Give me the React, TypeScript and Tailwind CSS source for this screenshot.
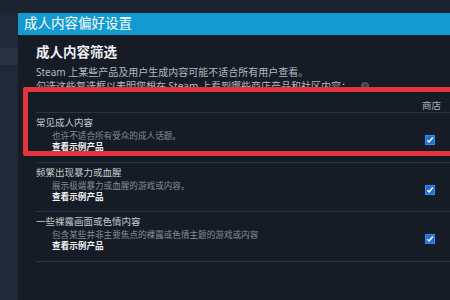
import React from "react";

const rows = [
  { title: "常见成人内容", desc: "也许不适合所有受众的成人话题。" },
  { title: "频繁出现暴力或血腥", desc: "展示极端暴力或血腥的游戏或内容。" },
  { title: "一些裸露画面或色情内容", desc: "包含某些并非主要焦点的裸露或色情主题的游戏或内容" },
];

const Checkbox = () => (
  <div className="w-[10px] h-[10px] bg-[#1f6fd6] border border-[#3b86e6] flex items-center justify-center">
    <svg width="8" height="8" viewBox="0 0 8 8">
      <path d="M1.3 4.3 L3.1 6 L6.8 1.6" stroke="#fff" strokeWidth="1.5" fill="none" />
    </svg>
  </div>
);

export default function App() {
  return (
    <div
      className="w-[450px] h-[300px] bg-[#1c2432] flex flex-col overflow-hidden"
      style={{ fontFamily: '"Noto Sans", "Noto Sans CJK SC", sans-serif' }}
    >
      {/* top strip */}
      <div className="h-[13px] shrink-0" />
      <div className="flex flex-1 min-h-0">
        {/* sidebar */}
        <div className="w-[18px] shrink-0 bg-[#1e2838] flex flex-col">
          <div className="h-[35px]" />
          <div className="h-[17px] bg-[#2a3341]" />
        </div>

        {/* panel */}
        <div className="flex-1 bg-[#161c26] relative">
          <div className="h-[22px] bg-[#139ad0] flex items-center px-[6px] text-white text-[13.5px] leading-none">
            成人内容偏好设置
          </div>

          <div className="pl-[18px]">
            <div className="mt-[9px] text-[13.5px] leading-[17px] font-bold text-[#eef0f2]">成人内容筛选</div>
            <div className="mt-[5px] text-[10px] leading-[13.5px] text-[#b4b9c0]">
              <div>Steam 上某些产品及用户生成内容可能不适合所有用户查看。</div>
              <div className="flex items-center">
                <span>勾选这些复选框以表明您想在 Steam 上看到哪些商店产品和社区内容：</span>
                <span className="ml-[10px] w-[8px] h-[8px] rounded-full bg-[#4b535f] text-[#1b2230] text-[6px] font-bold leading-none flex items-center justify-center">
                  ?
                </span>
              </div>
            </div>

            <div className="mt-[7px] flex justify-end pr-[9px] text-[9.5px] leading-[12px] text-[#a9afb7] border-b border-[#2c3441]">
              商店
            </div>

            {rows.map((r) => (
              <div key={r.title} className="h-[49.5px] border-b border-[#2c3441] flex justify-between">
                <div className="pt-[4px]">
                  <div className="text-[9.5px] leading-[12px] text-[#c5cad0]">{r.title}</div>
                  <div className="ml-[16px] mt-[2px] text-[8.6px] leading-[11px] text-[#858c96]">{r.desc}</div>
                  <div className="ml-[16px] text-[8.6px] leading-[11px] font-bold text-[#f2f4f6]">查看示例产品</div>
                </div>
                <div className="pt-[22px] pr-[15px]">
                  <Checkbox />
                </div>
              </div>
            ))}
          </div>

          {/* red annotation box */}
          <div className="absolute left-[5px] top-[74px] right-[-10px] h-[69px] border-[5px] border-[#e5343d] rounded-[2px]" />
        </div>
      </div>
    </div>
  );
}
